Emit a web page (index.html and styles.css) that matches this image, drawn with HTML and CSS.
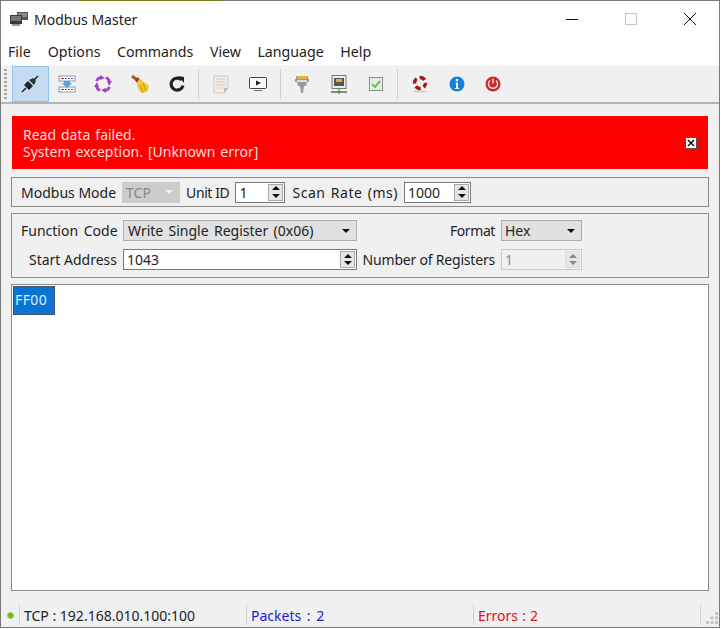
FILE: index.html
```html
<!DOCTYPE html>
<html lang="en">
<head>
<meta charset="utf-8">
<title>Modbus Master</title>
<link rel="stylesheet" href="styles.css">
</head>
<body>
<div class="window">
  <header class="titlebar">
    <svg class="appicon" width="20" height="16" viewBox="0 0 20 16"><rect x="8" y="1" width="11" height="8" fill="#555"/><rect x="9" y="2" width="9" height="4" fill="#888"/><rect x="1" y="4" width="12" height="9" fill="#3a3a3a"/><rect x="2" y="5" width="10" height="5" fill="#777"/><rect x="3" y="13" width="8" height="2" fill="#999"/></svg>
    <span class="apptitle">Modbus Master</span>
    <div class="winbtns">
      <svg class="winbtn" width="12" height="12" viewBox="0 0 12 12"><path d="M0 6.500H12" stroke="#111" fill="none"/></svg>
      <svg class="winbtn" width="12" height="12" viewBox="0 0 12 12"><rect x=".5" y=".5" width="11" height="11" stroke="#c4c4c4" fill="none"/></svg>
      <svg class="winbtn" width="12" height="12" viewBox="0 0 12 12"><path d="M0 0L12 12M12 0L0 12" stroke="#111" fill="none"/></svg>
    </div>
  </header>
  <nav class="menubar">
    <span>File</span><span>Options</span><span>Commands</span><span>View</span><span>Language</span><span>Help</span>
  </nav>
  <div class="toolbar">
    <div class="grip"></div>
    <button class="tool active"><svg width="22" height="22" viewBox="0 0 22 22"><path d="M3 19L7 15M15 7L19 3" stroke="#222" stroke-width="1.500"/><path d="M5 12L10 17L14 13L9 8Z" fill="#222"/><path d="M10 7L15 12L17 8L14 5Z" fill="#333"/></svg></button>
    <button class="tool"><svg width="22" height="22" viewBox="0 0 22 22"><rect x="3" y="3" width="16" height="5" fill="#fff" stroke="#8a99a8"/><rect x="3" y="14" width="16" height="5" fill="#fff" stroke="#8a99a8"/><path d="M5 5.500H8M12 5.500H14M5 16.500H8M12 16.500H14" stroke="#d22"/><path d="M9 5.500H11M15 5.500H17M9 16.500H11M15 16.500H17" stroke="#26c"/><path d="M8 8H14V10H16L11 15L6 10H8Z" fill="#5aa2e6"/></svg></button>
    <button class="tool"><svg width="22" height="22" viewBox="0 0 22 22"><path d="M8 4.500A7 7 0 0 0 4.500 8M14 4.500A7 7 0 0 1 17.500 8M17.500 14A7 7 0 0 1 14 17.500M8 17.500A7 7 0 0 1 4.500 14" stroke="#a040c8" stroke-width="3" fill="none"/><path d="M8 2L13 5L8 7ZM20 8L17 13L15 8ZM14 20L9 17L14 15ZM2 14L5 9L7 14Z" fill="#a040c8"/></svg></button>
    <button class="tool"><svg width="22" height="22" viewBox="0 0 22 22"><path d="M3 3L8 7" stroke="#9a6a20" stroke-width="3"/><path d="M6 7L9 4L11 7L8 10Z" fill="#c03020"/><path d="M8 9L11 6L20 13C20 16 18 19 14 20C10 19 8 14 8 9Z" fill="#f0c830"/><path d="M14 20L11 12M17 18L14 10" stroke="#c89a10"/></svg></button>
    <button class="tool"><svg width="22" height="22" viewBox="0 0 22 22"><path d="M15.500 7A6 6 0 1 0 17 12.500" stroke="#222" stroke-width="3.200" fill="none"/><path d="M12 3L18 4V10Z" fill="#222"/></svg></button>
    <div class="sep"></div>
    <button class="tool"><svg width="22" height="22" viewBox="0 0 22 22"><path d="M4 3H18V15L14 20H4Z" fill="#f0eeea" stroke="#ccc"/><path d="M6 6H16M6 9H16M6 12H16M6 15H13" stroke="#e3c8b8"/><path d="M14 20V15H18Z" fill="#bbb"/></svg></button>
    <button class="tool"><svg width="22" height="22" viewBox="0 0 22 22"><rect x="2.500" y="4.500" width="17" height="11" rx="1" fill="#f8f8f8" stroke="#444"/><path d="M9 7.500L14 10L9 12.500Z" fill="#222"/><path d="M7 17.500H15" stroke="#777"/></svg></button>
    <div class="sep"></div>
    <button class="tool"><svg width="22" height="22" viewBox="0 0 22 22"><path d="M5 3H17V6H18V9H16L15 13H13L12 20H10L9 13H7L6 9H4V6H5Z" fill="#9a9a9a"/><rect x="6" y="3" width="10" height="3" fill="#e2b04a"/><rect x="6" y="7" width="10" height="2" fill="#ddd"/></svg></button>
    <button class="tool"><svg width="22" height="22" viewBox="0 0 22 22"><rect x="4" y="2.500" width="14" height="13" fill="#eee" stroke="#777"/><rect x="6" y="5" width="10" height="8" fill="#555"/><rect x="8" y="6" width="6" height="3" fill="#d8b060"/><path d="M3 19H19" stroke="#222"/><path d="M11 15V19" stroke="#2a2"/><circle cx="11" cy="19" r="1.500" fill="#2a2"/></svg></button>
    <button class="tool"><svg width="22" height="22" viewBox="0 0 22 22"><rect x="4.500" y="4.500" width="13" height="13" fill="#e4ece4" stroke="#8c8c8c"/><path d="M7 11L10 14L15 8" stroke="#6cc04a" stroke-width="2" fill="none"/></svg></button>
    <div class="sep"></div>
    <button class="tool"><svg width="22" height="22" viewBox="0 0 22 22"><ellipse cx="11" cy="18.500" rx="7" ry="1" fill="#ccc"/><circle cx="11" cy="10" r="5.500" fill="none" stroke="#fff" stroke-width="3.500"/><circle cx="11" cy="10" r="5.500" fill="none" stroke="#a81818" stroke-width="3.500" stroke-dasharray="5.600 3" stroke-dashoffset="1"/></svg></button>
    <button class="tool"><svg width="22" height="22" viewBox="0 0 22 22"><circle cx="11" cy="11" r="7.500" fill="#1080e0"/><circle cx="11" cy="7" r="1.300" fill="#fff"/><path d="M9.500 9.500H12V15H13V16H9V15H10V10.500H9.500Z" fill="#fff"/></svg></button>
    <button class="tool"><svg width="22" height="22" viewBox="0 0 22 22"><circle cx="11" cy="11" r="7.500" fill="#c82828"/><path d="M8 7.500A4.500 4.500 0 1 0 14 7.500" stroke="#f4d8d8" stroke-width="1.500" fill="none"/><path d="M11 5.500V10.500" stroke="#f4d8d8" stroke-width="1.500"/></svg></button>
  </div>
  <main class="content">
    <div class="alert">
      <div class="alert-text">Read data failed.<br>System exception. [Unknown error]</div>
      <svg class="alert-close" width="12" height="12" viewBox="0 0 12 12"><rect x=".5" y=".5" width="11" height="11" fill="#fff" stroke="#555"/><path d="M3 3L9 9M9 3L3 9" stroke="#111" stroke-width="1.500"/></svg>
    </div>
    <section class="group row1">
      <span>Modbus Mode</span>
      <div class="combo disabled w-mode"><span class="combo-val">TCP</span><i class="arrow"></i></div>
      <span class="t-unit">Unit ID</span>
      <div class="spin w-unit"><span class="spin-val">1</span><div class="updown"><i class="up"></i><i class="down"></i></div></div>
      <span class="t-scan">Scan Rate (ms)</span>
      <div class="spin w-scan"><span class="spin-val">1000</span><div class="updown"><i class="up"></i><i class="down"></i></div></div>
    </section>
    <section class="group row2">
      <span class="lbl t-func">Function Code</span>
      <div class="combo"><span class="combo-val t-write">Write Single Register (0x06)</span><i class="arrow"></i></div>
      <span class="lbl t-format">Format</span>
      <div class="combo"><span class="combo-val">Hex</span><i class="arrow"></i></div>
      <span class="lbl">Start Address</span>
      <div class="spin"><span class="spin-val">1043</span><div class="updown"><i class="up"></i><i class="down"></i></div></div>
      <span class="lbl t-num">Number of Registers</span>
      <div class="spin disabled"><span class="spin-val">1</span><div class="updown"><i class="up"></i><i class="down"></i></div></div>
    </section>
    <section class="table"><div class="cell">FF00</div></section>
  </main>
  <footer class="status">
    <span class="led"></span>
    <span class="st st-conn">TCP : 192.168.010.100:100</span>
    <span class="st st-pack">Packets : 2</span>
    <span class="st st-err">Errors : 2</span>
    <span class="st st-grip"><svg width="14" height="14" viewBox="0 0 14 14" fill="#c4c4c4"><rect x="10" y="1" width="3" height="3"/><rect x="5.500" y="5.500" width="3" height="3"/><rect x="10" y="5.500" width="3" height="3"/><rect x="1" y="10" width="3" height="3"/><rect x="5.500" y="10" width="3" height="3"/><rect x="10" y="10" width="3" height="3"/></svg></span>
  </footer>
</div>
</body>
</html>
```
FILE: styles.css
```css
* { box-sizing: border-box; }
html, body { margin: 0; padding: 0; background: #fff; }
body { font-family: "Noto Sans", "Open Sans", sans-serif; font-size: 14px; color: #222; }
.window { width: 720px; height: 628px; border: 1px solid #7a7a7a; border-top: 0; background: #f0f0f0; display: flex; flex-direction: column; overflow: hidden; }
.titlebar { height: 37px; background: #fff; display: flex; align-items: center; padding-left: 8px; flex: none; border-top: 1px solid; border-image: linear-gradient(to right, #7a7a7a 80px, #7a7a10 80px, #7a7a10 220px, #7a7a7a 220px) 1; }
.appicon { margin-right: 5px; }
.apptitle { font-size: 14px; }
.winbtns { margin-left: auto; display: flex; }
.winbtn { margin: 0 23.500px; }
.menubar { height: 28px; background: #fff; display: flex; align-items: center; gap: 16.500px; padding: 0 0 0 7px; flex: none; font-size: 14.200px; }
.menubar span:nth-child(2) { margin-left: .6px; }
.toolbar { height: 39px; background: #f0f0f0; border-bottom: 2px solid #b4b4b4; border-top: 1px solid #f6f6f6; display: flex; align-items: center; padding-left: 3px; flex: none; }
.grip { width: 3px; height: 30px; margin-right: 5px; background: repeating-linear-gradient(to bottom, #a8a8a8 0 2px, transparent 2px 4px); }
.tool { width: 36.600px; height: 36px; padding: 0; border: 1px solid transparent; background: none; display: flex; align-items: center; justify-content: center; flex: none; }
.tool.active { background: #c4dcf2; border-color: #90c4ee; }
.sep { width: 1px; height: 30px; background: #cfcfcf; margin: 0 3.500px; flex: none; }
.content { flex: 1; display: flex; flex-direction: column; padding: 12px 10px 0 10px; min-height: 0; }
.alert { height: 53px; margin: 0 1px 8px; background: #f00; color: #fdd; display: flex; align-items: center; padding: 0 11px; flex: none; line-height: 17px; word-spacing: 1.300px; }
.alert-text { flex: 1; }
.group { border: 1px solid #8c8c8c; background: #f0f0f0; flex: none; }
.row1 { height: 30px; display: flex; align-items: center; padding-left: 9px; gap: 6px; margin-bottom: 6px; }
.t-unit { letter-spacing: -.4px; }
.t-scan { letter-spacing: .55px; word-spacing: 1px; margin-left: 1px; }
.row2 { height: 65px; padding: 6px 0 0 9px; display: grid; grid-template-columns: 102px 234px 144px 81px; grid-template-rows: 21px 21px; row-gap: 8px; align-items: center; margin-bottom: 6px; }
.row2 .lbl { text-align: right; padding-right: 6px; white-space: nowrap; }
.t-func { word-spacing: 2px; }
.t-format { letter-spacing: -.4px; }
.t-num { letter-spacing: -.2px; }
.t-write { word-spacing: 1.700px; margin-left: 1px; }
.combo { height: 21px; border: 1px solid #adadad; background: #e1e1e1; display: flex; align-items: center; padding: 0 3px; justify-content: space-between; }
.combo .arrow { border-left: 4px solid transparent; border-right: 4px solid transparent; border-top: 4px solid #111; margin-right: 3px; }
.combo.disabled { background: #ccc; border-color: #ccc; color: #888; }
.combo.disabled .arrow { border-top-color: #eee; }
.w-mode { width: 58px; }
.w-unit { width: 50px; }
.w-scan { width: 67px; }
.spin { height: 21px; border: 1px solid #7a7a7a; background: #fff; display: flex; align-items: center; justify-content: space-between; padding-left: 3px; }
.spin.disabled { background: #f0f0f0; border-color: #ccc; color: #888; }
.updown { width: 15px; height: 17px; margin-right: 1px; background: #e6e6e6; border: 1px solid #aaa; display: flex; flex-direction: column; align-items: center; justify-content: space-around; }
.updown i { border-left: 4px solid transparent; border-right: 4px solid transparent; }
.updown .up { border-bottom: 4px solid #111; }
.updown .down { border-top: 4px solid #111; }
.spin.disabled .updown { border-color: #ddd; }
.spin.disabled .updown .up { border-bottom-color: #888; }
.spin.disabled .updown .down { border-top-color: #888; }
.table { height: 307px; border: 1px solid #8c8c8c; background: #fff; padding: 1px; flex: none; }
.cell { width: 42px; height: 29px; background: #0a74d4; color: #d8ecff; border: 1px dotted #33465a; display: flex; align-items: center; padding: 0 0 2px 1px; letter-spacing: .4px; }
.status { height: 24px; margin-top: auto; display: flex; align-items: center; flex: none; }
.led { width: 7px; height: 7px; border-radius: 50%; background: #7cb518; margin-left: 6px; margin-right: 5px; flex: none; border: 1px solid #9fce5a; }
.st { height: 20px; border-left: 1px solid #d0d0d0; padding-left: 4px; display: flex; align-items: center; white-space: nowrap; flex: none; }
.st-conn { width: 227px; }
.st-pack { width: 227px; color: #1a1ae0; word-spacing: 2px; }
.st-err { width: 227px; color: #e01010; word-spacing: .5px; }
.st-grip { flex: 1; padding: 0; justify-content: flex-end; align-items: flex-end; }
```
